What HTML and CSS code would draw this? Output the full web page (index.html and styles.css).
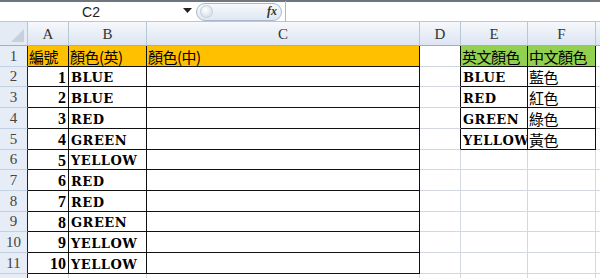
FILE: index.html
```html
<!DOCTYPE html>
<html>
<head>
<meta charset="utf-8">
<link rel="stylesheet" href="styles.css">
</head>
<body>
<div class="app">
  <div class="fbar">
    <div class="namebox">C2</div>
    <div class="dd"><svg width="9" height="5" viewBox="0 0 9 5"><path d="M0 0H9L4.5 5Z" fill="#222"/></svg></div>
    <div class="pill">
      <span class="knob"></span>
      <span class="fx">fx</span>
    </div>
    <div class="finput"></div>
  </div>
  <div class="sheet">
    <div class="ch corner"><span class="tri"></span></div>
    <div class="ch">A</div><div class="ch">B</div><div class="ch">C</div><div class="ch">D</div><div class="ch">E</div><div class="ch">F</div><div class="ch"></div>

    <div class="rh">1</div>
    <div class="c t y cjk">編號</div><div class="c t y cjk">顏色(英)</div><div class="c t y cjk">顏色(中)</div>
    <div class="c dk"></div><div class="c t g cjk">英文顏色</div><div class="c t g cjk">中文顏色</div><div class="c"></div>

    <div class="rh">2</div>
    <div class="c t n">1</div><div class="c t e">BLUE</div><div class="c t"></div>
    <div class="c dk"></div><div class="c t e">BLUE</div><div class="c t cjk">藍色</div><div class="c"></div>

    <div class="rh">3</div>
    <div class="c t n">2</div><div class="c t e">BLUE</div><div class="c t"></div>
    <div class="c dk"></div><div class="c t e">RED</div><div class="c t cjk">紅色</div><div class="c"></div>

    <div class="rh">4</div>
    <div class="c t n">3</div><div class="c t e">RED</div><div class="c t"></div>
    <div class="c dk"></div><div class="c t e">GREEN</div><div class="c t cjk">綠色</div><div class="c"></div>

    <div class="rh">5</div>
    <div class="c t n">4</div><div class="c t e">GREEN</div><div class="c t"></div>
    <div class="c dk"></div><div class="c t e">YELLOW</div><div class="c t cjk">黃色</div><div class="c"></div>

    <div class="rh">6</div>
    <div class="c t n">5</div><div class="c t e">YELLOW</div><div class="c t"></div>
    <div class="c"></div><div class="c"></div><div class="c"></div><div class="c"></div>

    <div class="rh">7</div>
    <div class="c t n">6</div><div class="c t e">RED</div><div class="c t"></div>
    <div class="c"></div><div class="c"></div><div class="c"></div><div class="c"></div>

    <div class="rh">8</div>
    <div class="c t n">7</div><div class="c t e">RED</div><div class="c t"></div>
    <div class="c"></div><div class="c"></div><div class="c"></div><div class="c"></div>

    <div class="rh">9</div>
    <div class="c t n">8</div><div class="c t e">GREEN</div><div class="c t"></div>
    <div class="c"></div><div class="c"></div><div class="c"></div><div class="c"></div>

    <div class="rh">10</div>
    <div class="c t n">9</div><div class="c t e">YELLOW</div><div class="c t"></div>
    <div class="c"></div><div class="c"></div><div class="c"></div><div class="c"></div>

    <div class="rh">11</div>
    <div class="c t n">10</div><div class="c t e">YELLOW</div><div class="c t"></div>
    <div class="c"></div><div class="c"></div><div class="c"></div><div class="c"></div>

    <div class="rh"></div>
    <div class="c"></div><div class="c"></div><div class="c"></div>
    <div class="c"></div><div class="c"></div><div class="c"></div><div class="c"></div>
  </div>
</div>
</body>
</html>
```
FILE: styles.css
```css
* { box-sizing: border-box; }
html, body { margin: 0; padding: 0; background: #fff; }
.app { width: 600px; height: 278px; overflow: hidden; }

.fbar {
  height: 22px;
  border-top: 2px solid #6f7680;
  border-bottom: 1px solid #b9c6d6;
  display: flex;
  align-items: center;
  background: #fff;
}
.namebox {
  width: 178px;
  text-align: center;
  font-family: "Liberation Sans", Arial, sans-serif;
  font-size: 14px;
  color: #222;
  padding-left: 4px;
}
.dd { width: 18px; display: flex; align-items: center; justify-content: center; padding-bottom: 2px; }
.pill {
  width: 86px;
  height: 18px;
  border: 1px solid #a9b8cc;
  border-radius: 9px;
  background: linear-gradient(#f7f9fc, #dfe7f2);
  display: flex;
  align-items: center;
  justify-content: space-between;
  padding: 0 4px 0 3px;
}
.knob {
  width: 13px; height: 13px; border-radius: 50%;
  background: radial-gradient(circle at 40% 35%, #fff, #cdd7e4);
  border: 1px solid #c3cedc;
}
.fx {
  font-family: "Liberation Serif", serif;
  font-style: italic;
  font-weight: bold;
  font-size: 12px;
  color: #333;
}
.finput { flex: 1; height: 21px; border-left: 1px solid #a9b8cc; margin-left: 3px; }

.sheet {
  display: grid;
  grid-template-columns: 28px 41px 78px 273px 41px 67px 68px 10px;
  grid-template-rows: 24px 21px 20px 21px 21px 21px 20px 21px 21px 20px 21px 21px 21px;
}
.ch {
  background: linear-gradient(#f6f8fc, #dce5f1);
  border-right: 1px solid #b9c6d6;
  border-bottom: 1px solid #9eb0c8;
  font-family: "Liberation Serif", serif;
  font-size: 15px;
  color: #333;
  display: flex; align-items: center; justify-content: center;
  padding-top: 2px;
}
.corner { position: relative; background: #e4ebf4; }
.tri {
  position: absolute; right: 3px; bottom: 3px;
  width: 0; height: 0;
  border-left: 13px solid transparent;
  border-bottom: 13px solid #c7d1de;
}
.rh {
  background: #e6edf6;
  border-right: 1px solid #222;
  border-bottom: 1px solid #c3d0e0;
  font-family: "Liberation Serif", serif;
  font-size: 15px;
  color: #444;
  display: flex; align-items: center; justify-content: center;
}
.c {
  border-right: 1px solid #d4d9e1;
  border-bottom: 1px solid #d4d9e1;
  display: flex; align-items: center;
  white-space: nowrap;
  overflow: hidden;
  color: #000;
}
.c.t { border-right-color: #111; border-bottom-color: #111; }
.c.dk { border-right-color: #111; }
.y { background: #ffc000; }
.g { background: #92d050; }
.cjk {
  font-family: "Noto Sans CJK TC", "Noto Sans CJK SC", sans-serif;
  font-size: 15px;
  padding-left: 1px;
  letter-spacing: -0.5px;
}
.e {
  font-family: "DejaVu Serif", serif;
  font-weight: bold;
  font-size: 13px;
  letter-spacing: 0.5px;
  padding-left: 2px;
  padding-top: 2px;
}
.n {
  font-family: "Liberation Serif", serif;
  font-weight: bold;
  font-size: 16px;
  justify-content: flex-end;
  padding-right: 2px;
  padding-top: 2px;
}
```
